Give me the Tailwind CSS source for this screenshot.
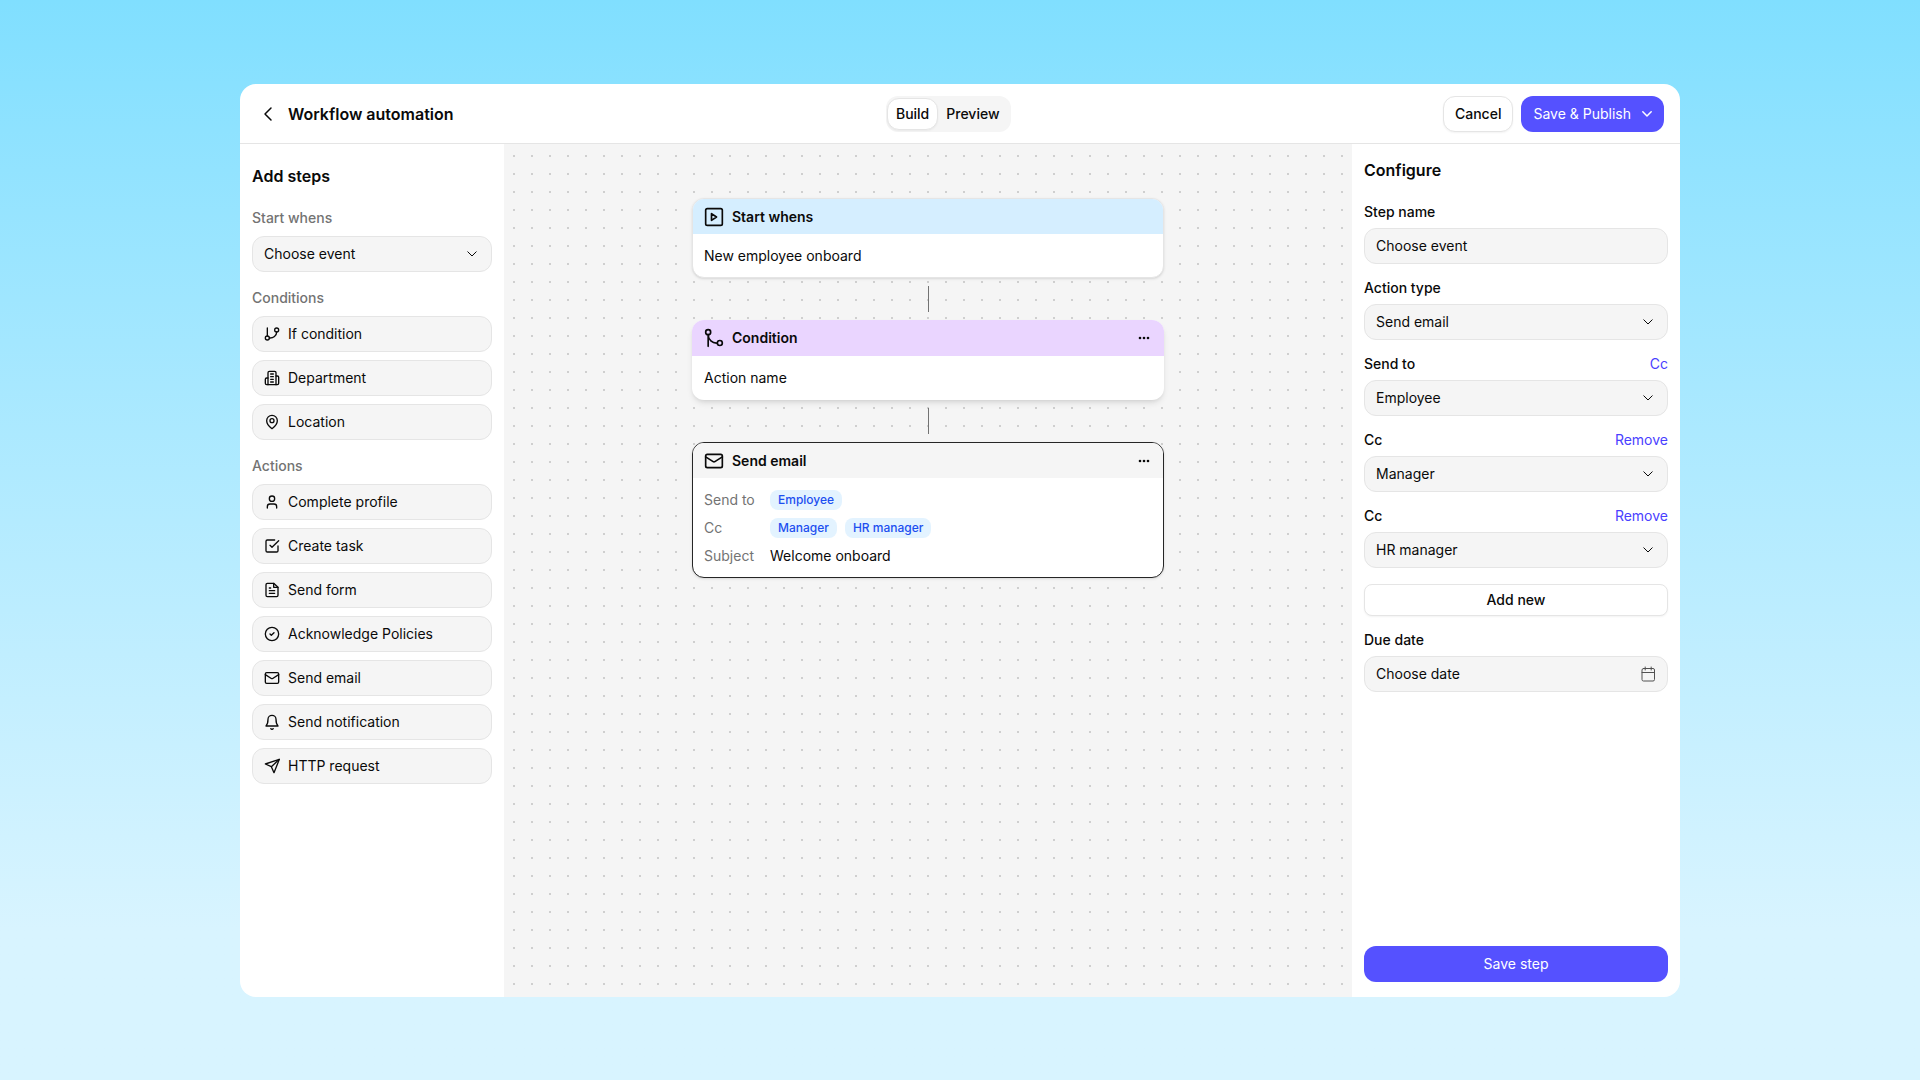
<!DOCTYPE html>
<html lang="en">
<head>
    <meta charset="UTF-8">
    <meta name="viewport" content="width=device-width, initial-scale=1.0">
    <title>Workflow automation</title>
    <script src="https://cdn.jsdelivr.net/npm/@tailwindcss/browser@4"></script>
</head>
<body class="font-['Inter',sans-serif] text-sm leading-5 text-neutral-950 bg-[#d8f4ff]">
<!-- shared icons -->
<svg class="hidden" fill="none" stroke="currentColor">
    <symbol id="chevron" viewBox="0 0 16 16"><path d="M3.800 5.800 8 10l4.200-4.200" fill="none" stroke="currentColor" stroke-linecap="round" stroke-linejoin="round"/></symbol>
    <symbol id="mail" viewBox="0 0 24 24"><g fill="none" stroke="currentColor" stroke-linecap="round" stroke-linejoin="round"><rect x="2" y="4" width="20" height="16" rx="2"/><path d="m22 7-8.970 5.700a1.940 1.940 0 0 1-2.060 0L2 7"/></g></symbol>
    <symbol id="more" viewBox="0 0 16 16"><g fill="currentColor"><circle cx="4" cy="8" r="1.300"/><circle cx="8" cy="8" r="1.300"/><circle cx="12" cy="8" r="1.300"/></g></symbol>
</svg>
<div class="flex min-h-screen bg-linear-to-b from-[#80dfff] to-[#d8f4ff] to-86% px-[12.5vw] pt-[84px] pb-[83px]">
    <div class="flex flex-1 flex-col overflow-hidden rounded-2xl bg-white">
        <header class="flex items-center justify-between border-b border-neutral-200 pt-3 pb-[11px] pl-5 pr-4">
            <div class="flex items-center gap-3">
                <button type="button" aria-label="Back"><svg class="size-4" viewBox="0 0 16 16" fill="none" stroke="currentColor" stroke-width="1.500" stroke-linecap="round" stroke-linejoin="round"><path d="M11 2 5 8l6 6"/></svg></button>
                <h1 class="text-base font-semibold">Workflow automation</h1>
            </div>
            <nav class="flex rounded-xl bg-neutral-100 p-px font-medium">
                <button type="button" class="my-px rounded-xl border border-neutral-200 bg-white px-2 py-[5px] shadow-xs">Build</button>
                <button type="button" class="pl-2 pr-[10px]">Preview</button>
            </nav>
            <div class="flex gap-2 font-medium">
                <button type="button" class="h-9 rounded-xl border border-neutral-200 bg-white px-[11px] shadow-xs">Cancel</button>
                <button type="button" class="flex h-9 items-center gap-2 rounded-xl bg-[#5551ff] pl-3 pr-[9px] font-normal text-white">Save &amp; Publish <svg class="size-4" stroke-width="1.500"><use href="#chevron"/></svg></button>
            </div>
        </header>
        <div class="flex flex-1">
            <aside class="w-[264px] shrink-0 px-3 py-5">
                <h2 class="mb-5 text-base font-semibold">Add steps</h2>
                <label for="event" class="mb-2 block font-medium text-neutral-500">Start whens</label>
                <div class="relative mb-4">
                    <select id="event" class="block h-9 w-full appearance-none rounded-xl border border-neutral-200 bg-neutral-100 px-[11px]"><option>Choose event</option></select>
                    <svg class="pointer-events-none absolute right-3 top-[10px] size-4"><use href="#chevron"/></svg>
                </div>
                <h3 class="mb-2 font-medium text-neutral-500">Conditions</h3>
                <div class="mb-4 flex flex-col gap-2">
                    <button type="button" class="flex h-9 items-center gap-2 rounded-xl border border-neutral-200 bg-neutral-100 px-[11px]">
                        <svg class="size-4" viewBox="0 0 24 24" fill="none" stroke="currentColor" stroke-width="2" stroke-linecap="round" stroke-linejoin="round"><path d="M5 3v12"/><circle cx="19" cy="6" r="3"/><circle cx="5" cy="18" r="3"/><path d="M19 9a10 9 0 0 1-11 9"/></svg>
                        If condition
                    </button>
                    <button type="button" class="flex h-9 items-center gap-2 rounded-xl border border-neutral-200 bg-neutral-100 px-[11px]">
                        <svg class="size-4" viewBox="0 0 24 24" fill="none" stroke="currentColor" stroke-width="2" stroke-linecap="round" stroke-linejoin="round"><path d="M6 22V4a2 2 0 0 1 2-2h8a2 2 0 0 1 2 2v18Z"/><path d="M6 12H4a2 2 0 0 0-2 2v6a2 2 0 0 0 2 2h2"/><path d="M18 9h2a2 2 0 0 1 2 2v9a2 2 0 0 1-2 2h-2"/><path d="M10 6h4M10 10h4M10 14h4M10 18h4"/></svg>
                        Department
                    </button>
                    <button type="button" class="flex h-9 items-center gap-2 rounded-xl border border-neutral-200 bg-neutral-100 px-[11px]">
                        <svg class="size-4" viewBox="0 0 24 24" fill="none" stroke="currentColor" stroke-width="2" stroke-linecap="round" stroke-linejoin="round"><path d="M20 10c0 6-8 12-8 12s-8-6-8-12a8 8 0 0 1 16 0Z"/><circle cx="12" cy="10" r="3"/></svg>
                        Location
                    </button>
                </div>
                <h3 class="mb-2 font-medium text-neutral-500">Actions</h3>
                <div class="flex flex-col gap-2">
                    <button type="button" class="flex h-9 items-center gap-2 rounded-xl border border-neutral-200 bg-neutral-100 px-[11px]">
                        <svg class="size-4" viewBox="0 0 24 24" fill="none" stroke="currentColor" stroke-width="2" stroke-linecap="round" stroke-linejoin="round"><path d="M19 21v-2a4 4 0 0 0-4-4H9a4 4 0 0 0-4 4v2"/><circle cx="12" cy="7" r="4"/></svg>
                        Complete profile
                    </button>
                    <button type="button" class="flex h-9 items-center gap-2 rounded-xl border border-neutral-200 bg-neutral-100 px-[11px]">
                        <svg class="size-4" viewBox="0 0 24 24" fill="none" stroke="currentColor" stroke-width="2" stroke-linecap="round" stroke-linejoin="round"><path d="m9 11 3 3L22 4"/><path d="M21 12v7a2 2 0 0 1-2 2H5a2 2 0 0 1-2-2V5a2 2 0 0 1 2-2h11"/></svg>
                        Create task
                    </button>
                    <button type="button" class="flex h-9 items-center gap-2 rounded-xl border border-neutral-200 bg-neutral-100 px-[11px]">
                        <svg class="size-4" viewBox="0 0 24 24" fill="none" stroke="currentColor" stroke-width="2" stroke-linecap="round" stroke-linejoin="round"><path d="M14.500 2H5a2 2 0 0 0-2 2v16a2 2 0 0 0 2 2h14a2 2 0 0 0 2-2V8Z"/><path d="M14.500 2v6H21M16 13H8M16 17H8M10 9H8"/></svg>
                        Send form
                    </button>
                    <button type="button" class="flex h-9 items-center gap-2 rounded-xl border border-neutral-200 bg-neutral-100 px-[11px]">
                        <svg class="size-4" viewBox="0 0 24 24" fill="none" stroke="currentColor" stroke-width="2" stroke-linecap="round" stroke-linejoin="round"><circle cx="12" cy="12" r="10"/><path d="m9 12 2 2 4-4"/></svg>
                        Acknowledge Policies
                    </button>
                    <button type="button" class="flex h-9 items-center gap-2 rounded-xl border border-neutral-200 bg-neutral-100 px-[11px]">
                        <svg class="size-4" stroke-width="2"><use href="#mail"/></svg>
                        Send email
                    </button>
                    <button type="button" class="flex h-9 items-center gap-2 rounded-xl border border-neutral-200 bg-neutral-100 px-[11px]">
                        <svg class="size-4" viewBox="0 0 24 24" fill="none" stroke="currentColor" stroke-width="2" stroke-linecap="round" stroke-linejoin="round"><path d="M6 8a6 6 0 0 1 12 0c0 7 3 10 3 10H3s3-3 3-10"/><path d="M10.300 22a1.940 1.940 0 0 0 3.400 0"/></svg>
                        Send notification
                    </button>
                    <button type="button" class="flex h-9 items-center gap-2 rounded-xl border border-neutral-200 bg-neutral-100 px-[11px]">
                        <svg class="size-4" viewBox="0 0 24 24" fill="none" stroke="currentColor" stroke-width="2" stroke-linecap="round" stroke-linejoin="round"><path d="m23 2-8 20-4-9-9-4Z"/><path d="M23 2 11 13"/></svg>
                        HTTP request
                    </button>
                </div>
            </aside>

            <!-- dotted canvas -->
            <main class="flex flex-1 flex-col items-center gap-2 bg-neutral-100 bg-[radial-gradient(circle,#cfcfcf_1px,transparent_1px)] bg-[length:18px_18px] bg-[position:1px_3px] pt-[54px]">
                <section class="w-[472px] overflow-hidden rounded-xl border border-neutral-200 bg-white shadow-sm">
                    <div class="flex h-[35px] items-center gap-2 bg-[#d5eeff] px-[11px]">
                        <svg class="size-5" viewBox="0 0 24 24" fill="none" stroke="currentColor" stroke-width="2" stroke-linecap="round" stroke-linejoin="round"><rect x="2" y="2" width="20" height="20" rx="2"/><path d="m9 8 6 4-6 4Z"/></svg>
                        <h3 class="font-semibold">Start whens</h3>
                    </div>
                    <p class="px-[11px] pt-3 pb-[11px]">New employee onboard</p>
                </section>
                <div class="h-[26px] w-px bg-neutral-500"></div>
                <section class="w-[472px] overflow-hidden rounded-xl bg-white shadow-md">
                    <div class="flex h-9 items-center gap-2 bg-[#ead5ff] px-3">
                        <svg class="size-5" viewBox="0 0 24 24" fill="none" stroke="currentColor" stroke-width="2" stroke-linecap="round" stroke-linejoin="round"><circle cx="19" cy="18" r="3"/><circle cx="5" cy="5" r="3"/><path d="M5 22V8a10 10 0 0 0 11 10"/></svg>
                        <h3 class="font-semibold">Condition</h3>
                        <button type="button" aria-label="More" class="ml-auto"><svg class="size-4"><use href="#more"/></svg></button>
                    </div>
                    <p class="px-3 py-3">Action name</p>
                </section>
                <div class="h-[26px] w-px bg-neutral-500"></div>
                <section class="w-[472px] overflow-hidden rounded-xl border border-neutral-800 bg-white shadow-sm">
                    <div class="flex h-[35px] items-center gap-2 bg-neutral-100 px-[11px]">
                        <svg class="size-5" stroke-width="2"><use href="#mail"/></svg>
                        <h3 class="font-semibold">Send email</h3>
                        <button type="button" aria-label="More" class="ml-auto"><svg class="size-4"><use href="#more"/></svg></button>
                    </div>
                    <dl class="grid grid-cols-[66px_1fr] auto-rows-[28px] items-center px-[11px] pt-2 pb-[7px]">
                        <dt class="text-neutral-500">Send to</dt>
                        <dd class="flex gap-2 text-xs font-medium text-[#1d4ff0]"><span class="rounded-lg bg-[#e3f3ff] px-2 py-[2px]">Employee</span></dd>
                        <dt class="text-neutral-500">Cc</dt>
                        <dd class="flex gap-2 text-xs font-medium text-[#1d4ff0]"><span class="rounded-lg bg-[#e3f3ff] px-2 py-[2px]">Manager</span><span class="rounded-lg bg-[#e3f3ff] px-2 py-[2px]">HR manager</span></dd>
                        <dt class="text-neutral-500">Subject</dt>
                        <dd>Welcome onboard</dd>
                    </dl>
                </section>
            </main>

            <aside class="flex w-[328px] shrink-0 flex-col px-3 pt-[14px] pb-[15px]">
                <h2 class="mb-5 text-base font-semibold">Configure</h2>
                <form class="flex flex-1 flex-col gap-[14px]">
                    <div>
                        <label for="step-name" class="mb-[6px] block font-medium">Step name</label>
                        <input id="step-name" type="text" value="Choose event" class="block h-9 w-full rounded-xl border border-neutral-200 bg-neutral-100 px-[11px] pb-[2px]">
                    </div>
                    <div>
                        <label for="action-type" class="mb-[6px] block font-medium">Action type</label>
                        <div class="relative">
                            <select id="action-type" class="block h-9 w-full appearance-none rounded-xl border border-neutral-200 bg-neutral-100 px-[11px]"><option>Send email</option></select>
                            <svg class="pointer-events-none absolute right-3 top-[10px] size-4"><use href="#chevron"/></svg>
                        </div>
                    </div>
                    <div>
                        <div class="mb-[6px] flex justify-between">
                            <label for="send-to" class="font-medium">Send to</label>
                            <a href="#" class="text-[#4a3fff]">Cc</a>
                        </div>
                        <div class="relative">
                            <select id="send-to" class="block h-9 w-full appearance-none rounded-xl border border-neutral-200 bg-neutral-100 px-[11px]"><option>Employee</option></select>
                            <svg class="pointer-events-none absolute right-3 top-[10px] size-4"><use href="#chevron"/></svg>
                        </div>
                    </div>
                    <div>
                        <div class="mb-[6px] flex justify-between">
                            <label for="cc-1" class="font-medium">Cc</label>
                            <a href="#" class="text-[#4a3fff]">Remove</a>
                        </div>
                        <div class="relative">
                            <select id="cc-1" class="block h-9 w-full appearance-none rounded-xl border border-neutral-200 bg-neutral-100 px-[11px]"><option>Manager</option></select>
                            <svg class="pointer-events-none absolute right-3 top-[10px] size-4"><use href="#chevron"/></svg>
                        </div>
                    </div>
                    <div>
                        <div class="mb-[6px] flex justify-between">
                            <label for="cc-2" class="font-medium">Cc</label>
                            <a href="#" class="text-[#4a3fff]">Remove</a>
                        </div>
                        <div class="relative mb-4">
                            <select id="cc-2" class="block h-9 w-full appearance-none rounded-xl border border-neutral-200 bg-neutral-100 px-[11px]"><option>HR manager</option></select>
                            <svg class="pointer-events-none absolute right-3 top-[10px] size-4"><use href="#chevron"/></svg>
                        </div>
                        <button type="button" class="block h-8 w-full rounded-lg border border-neutral-200 bg-white font-medium shadow-xs">Add new</button>
                    </div>
                    <div>
                        <label for="due-date" class="mb-[6px] block font-medium">Due date</label>
                        <div class="relative">
                            <input id="due-date" type="text" value="Choose date" class="block h-9 w-full rounded-xl border border-neutral-200 bg-neutral-100 px-[11px] pb-[2px]">
                            <svg class="pointer-events-none absolute right-3 top-[10px] size-4 text-neutral-600" viewBox="0 0 16 16" fill="none" stroke="currentColor" stroke-linecap="round" stroke-linejoin="round"><rect x="2" y="2.500" width="12.500" height="12.500" rx="1.500"/><path d="M2 6.500h12.500M5.200 1v3M11.200 1v3"/></svg>
                        </div>
                    </div>
                    <button type="submit" class="mt-auto h-9 rounded-xl bg-[#5551ff] text-white">Save step</button>
                </form>
            </aside>
        </div>
    </div>
</div>
</body>
</html>
